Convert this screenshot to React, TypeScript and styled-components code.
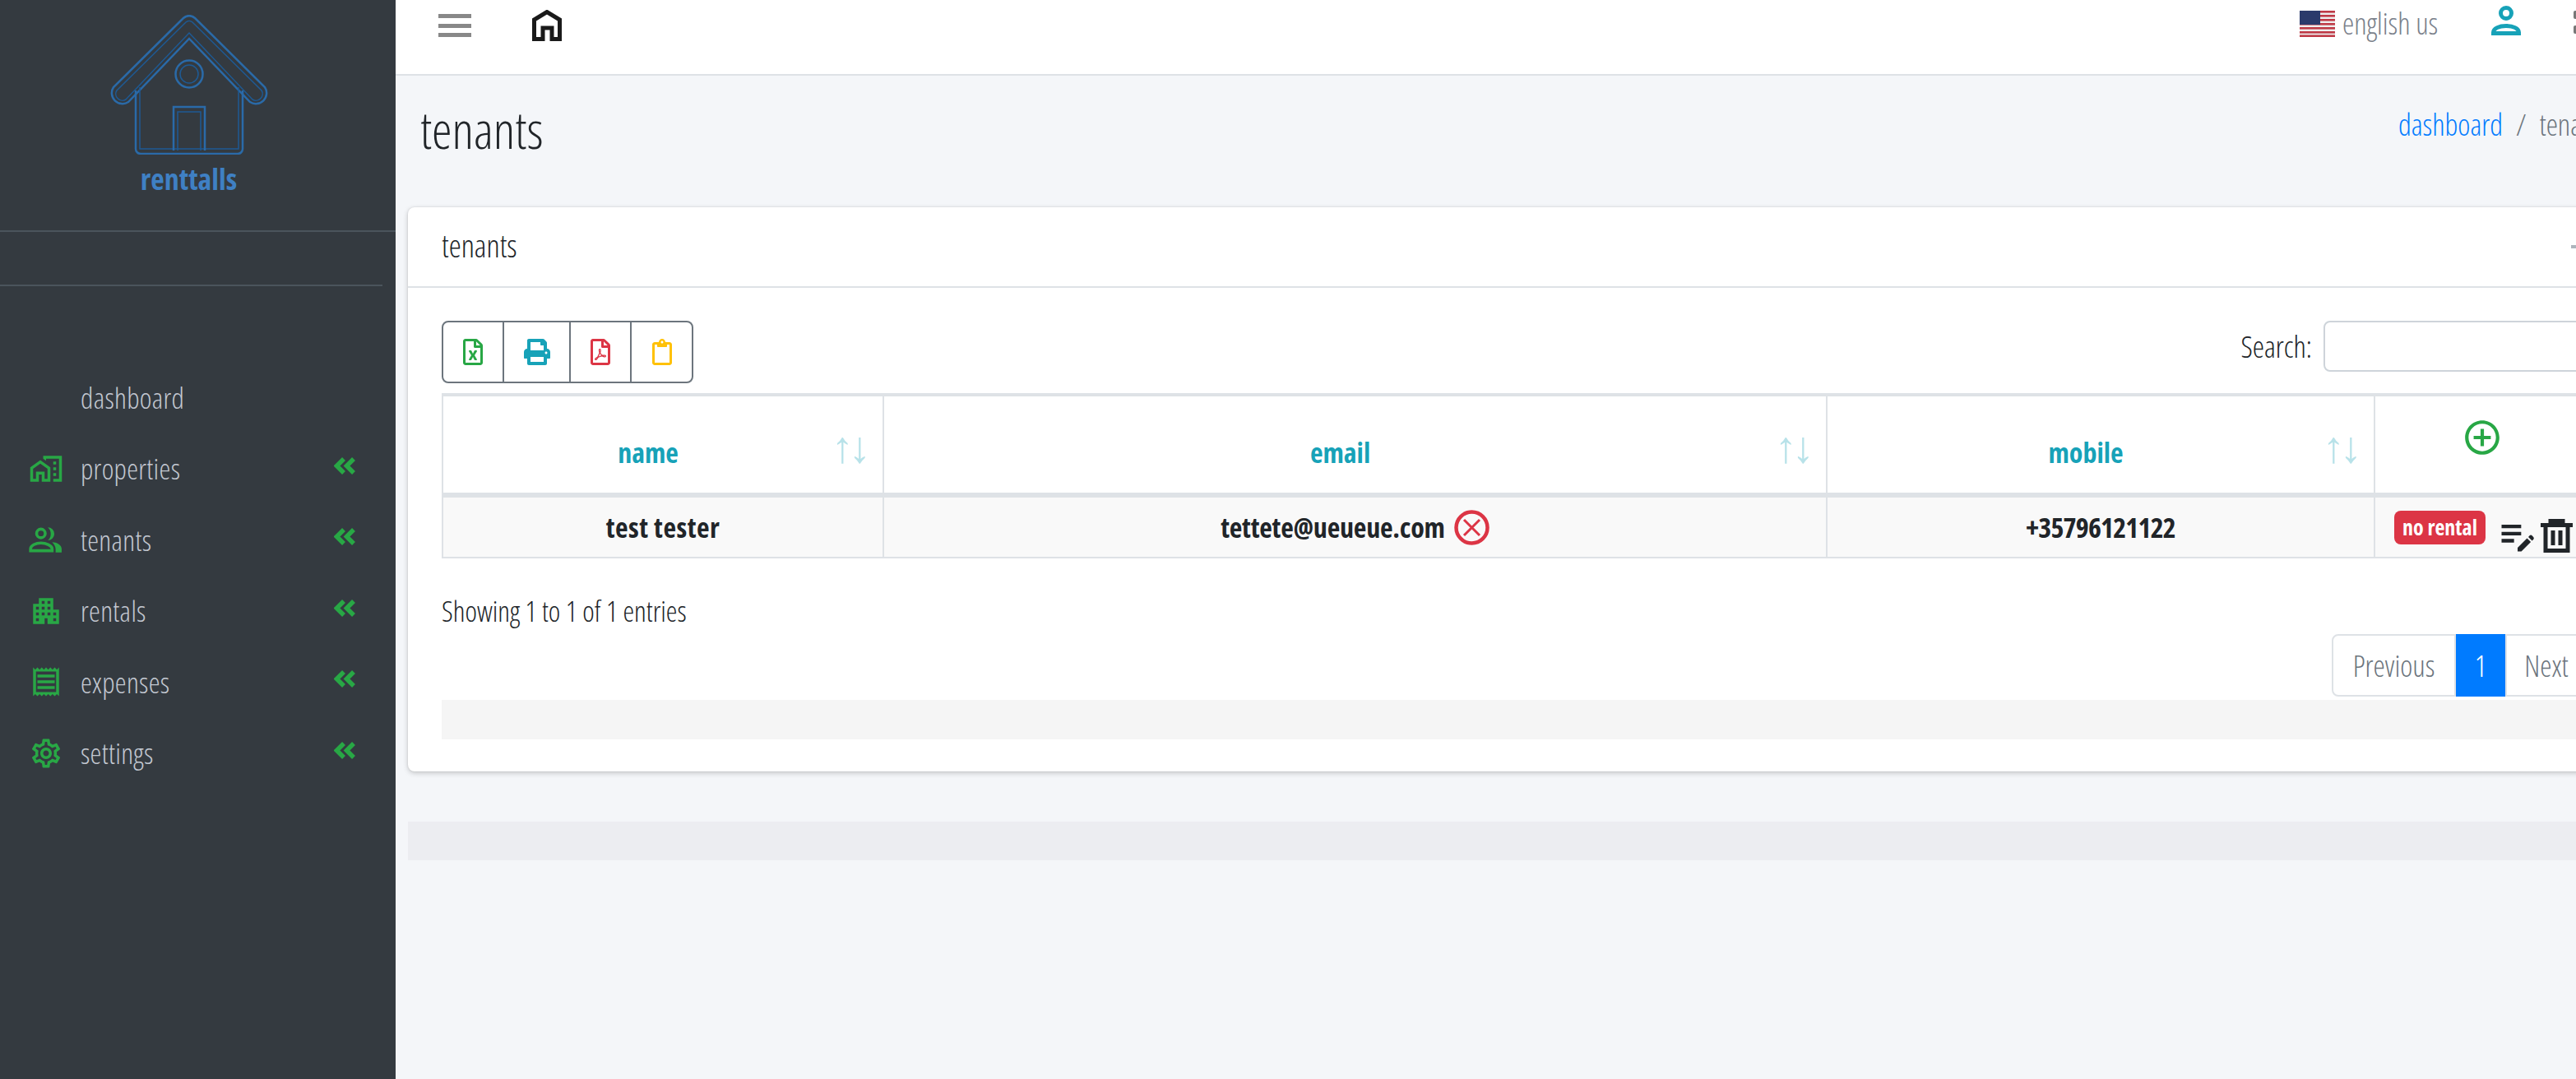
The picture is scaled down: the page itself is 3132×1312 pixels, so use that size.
import React from "react";
import styled, { createGlobalStyle } from "styled-components";
import {
  MdOutlineHomeWork,
  MdApartment,
  MdOutlineReceipt,
  MdOutlineSettings,
  MdOutlineEditNote,
  MdOutlineAddCircleOutline,
} from "react-icons/md";
import { FaRegFileExcel, FaPrint, FaRegFilePdf, FaRegClipboard } from "react-icons/fa";

const GlobalStyle = createGlobalStyle`
  html, body { margin: 0; padding: 0; height: 100%; overflow: hidden; }
  body {
    font-family: "Open Sans", "Liberation Sans", sans-serif;
    font-weight: 300;
    font-stretch: 75%;
    background: #f4f6f9;
  }
  button, input { font: inherit; }
`;

const Page = styled.div`
  display: flex;
  width: 3132px;
  height: 1312px;
  overflow: hidden;
`;

const Sidebar = styled.aside`
  flex: none;
  width: 481px;
  background: #343a40;
  display: flex;
  flex-direction: column;
`;

const Brand = styled.div`
  box-sizing: border-box;
  height: 282px;
  border-bottom: 2px solid #4b545c;
  display: flex;
  flex-direction: column;
  align-items: center;
  padding: 18px 22px 0 0;
`;

const BrandName = styled.div`
  margin-top: 12px;
  color: #3f80c4;
  font-size: 36px;
  font-weight: 700;
  line-height: 36px;
`;

const UserPanel = styled.div`
  height: 64px;
  width: 465px;
  border-bottom: 2px solid #4b545c;
`;

const Nav = styled.nav`
  margin-top: 92px;
  display: flex;
  flex-direction: column;
`;

const NavItem = styled.div`
  height: 86.5px;
  display: flex;
  align-items: center;
  padding: 0 49px 0 35px;
  color: #c2c7d0;
  font-size: 35px;
  letter-spacing: 0.3px;
`;

const NavIcon = styled.span`
  width: 42px;
  height: 42px;
  margin-right: 21px;
  color: #28a745;
  font-size: 42px;
  display: flex;
`;

const NavLabel = styled.span`
  flex: 1;
`;

const Chevron = styled.svg`
  width: 26px;
  height: 21px;
  margin-top: -7px;
  fill: none;
  stroke: #28a745;
  stroke-width: 5.5;
`;

const Main = styled.main`
  flex: none;
  width: 2722px;
  display: flex;
  flex-direction: column;
`;

const TopBar = styled.header`
  height: 92px;
  box-sizing: border-box;
  background: #fff;
  border-bottom: 2px solid #dee2e6;
  display: flex;
  padding-left: 52px;
`;

const Burger = styled.div`
  width: 40px;
  height: 28px;
  margin-top: 17px;
  display: flex;
  flex-direction: column;
  justify-content: space-between;
  span { height: 5px; background: #888; }
`;

const HomeIcon = styled.svg`
  width: 36px;
  height: 38px;
  margin: 12px 0 0 74px;
  fill: none;
  stroke: #1a1a1a;
  stroke-width: 5;
`;

const TopRight = styled.div`
  margin-left: auto;
  width: 407px;
  display: flex;
  align-items: flex-start;
`;

const Lang = styled.span`
  width: 233px;
  margin-top: 4px;
  display: flex;
  align-items: center;
  gap: 9px;
  color: #7a808a;
  font-size: 36px;
  white-space: nowrap;
`;

const FlagIcon = styled.svg`
  flex: none;
  width: 43px;
  height: 32px;
`;

const UserIcon = styled.svg`
  width: 36px;
  height: 36px;
  margin-top: 7px;
  fill: none;
  stroke: #17a2b8;
  stroke-width: 5;
`;

const AppsStub = styled.div`
  margin: 13px 0 0 64px;
  display: flex;
  flex-direction: column;
  gap: 8px;
  span { width: 10px; height: 10px; background: #777; border-radius: 2px; }
`;

const ContentHeader = styled.div`
  box-sizing: border-box;
  height: 160px;
  padding: 28px 0 0 30px;
  display: flex;
  justify-content: space-between;
`;

const Title = styled.h1`
  margin: 0;
  font-size: 62px;
  font-weight: 300;
  color: #212529;
  line-height: 1.2;
`;

const Crumbs = styled.div`
  width: 287px;
  margin-top: 7px;
  font-size: 36px;
  color: #6c757d;
  display: flex;
  gap: 16px;
  white-space: nowrap;
  a { color: #007bff; }
`;

const Card = styled.section`
  margin-left: 15px;
  width: 2692px;
  background: #fff;
  border-radius: 8px;
  box-shadow: 0 0 2px rgba(0,0,0,.125), 0 2px 6px rgba(0,0,0,.2);
`;

const CardHeader = styled.div`
  box-sizing: border-box;
  height: 98px;
  border-bottom: 2px solid #dee2e6;
  padding: 0 46px 4px 41px;
  font-size: 38px;
  color: #212529;
  display: flex;
  align-items: center;
  justify-content: space-between;
`;

const CollapseTool = styled.span`
  width: 16px;
  height: 4px;
  background: #adb5bd;
  margin-top: 4px;
`;

const CardBody = styled.div`
  padding: 40px 40px 39px 41px;
`;

const ToolRow = styled.div`
  display: flex;
  justify-content: space-between;
  height: 88px;
`;

const BtnGroup = styled.div`
  display: flex;
  height: 76px;
  box-sizing: border-box;
  border: 2px solid #6c757d;
  border-radius: 8px;
`;

const ToolBtn = styled.button<{ $w: number; $c: string }>`
  width: ${(p) => p.$w}px;
  background: none;
  border: none;
  border-right: 2px solid #6c757d;
  color: ${(p) => p.$c};
  font-size: 32px;
  display: flex;
  align-items: center;
  justify-content: center;
  padding: 0;
  &:last-child { border-right: none; }
`;

const SearchBox = styled.label`
  display: flex;
  gap: 14px;
  font-size: 36px;
  color: #212529;
  height: 62px;
  align-items: center;
`;

const SearchInput = styled.input`
  width: 323px;
  height: 62px;
  box-sizing: border-box;
  border: 2px solid #ced4da;
  border-radius: 8px;
`;

const Table = styled.table`
  width: 100%;
  table-layout: fixed;
  border-collapse: collapse;
`;

const Th = styled.th<{ $w: number }>`
  width: ${(p) => p.$w}px;
  height: 122px;
  box-sizing: border-box;
  padding: 18px 36px 0 0;
  border: 2px solid #dee2e6;
  border-top-width: 4px;
  border-bottom-width: 6px;
  color: #17a2b8;
  font-size: 34px;
  font-weight: 700;
  position: relative;
`;

const SortGlyph = styled.span`
  position: absolute;
  right: 20px;
  top: 22px;
  font-size: 54px;
  font-weight: 300;
  opacity: .3;
  letter-spacing: -6px;
`;

const AddCell = styled(Th)`
  padding: 0;
`;

const AddIcon = styled.span`
  color: #28a745;
  font-size: 50px;
  display: flex;
  justify-content: center;
  margin-top: -18px;
`;

const Td = styled.td<{ $spacing?: number }>`
  height: 72px;
  background: #f9f9f9;
  border: 2px solid #dee2e6;
  text-align: center;
  font-size: 34px;
  font-weight: 700;
  letter-spacing: ${(p) => p.$spacing ?? 0}px;
  color: #212529;
  padding: 0;
  white-space: nowrap;
`;

const EmailCell = styled.span`
  display: inline-flex;
  align-items: center;
  gap: 11px;
`;

const RemoveIcon = styled.svg`
  width: 43px;
  height: 43px;
  fill: none;
  stroke: #dc3545;
  stroke-width: 4.5;
`;

const ActionCell = styled.div`
  display: flex;
  align-items: center;
  padding-left: 23px;
`;

const Badge = styled.span`
  background: #dc3545;
  color: #fff;
  border-radius: 8px;
  width: 111px;
  height: 41px;
  display: flex;
  align-items: center;
  justify-content: center;
  font-size: 26px;
  font-weight: 700;
  margin-right: 13px;
`;

const EditIcon = styled.span`
  display: flex;
  font-size: 52px;
  color: #212529;
  margin: 10px 2px -10px 0;
`;

const TrashIcon = styled.svg`
  width: 39px;
  height: 41px;
  fill: none;
  stroke: #212529;
  stroke-width: 5;
  margin: 10px 0 -10px 0;
`;

const Info = styled.div`
  margin-top: 42px;
  font-size: 34.5px;
  color: #212529;
  line-height: 44px;
`;

const PagerRow = styled.div`
  margin-top: 6px;
  display: flex;
  padding-left: 2298px;
`;

const Pager = styled.div`
  display: flex;
  height: 76px;
  font-size: 36px;
  color: #6c757d;
`;

const PageBtn = styled.span<{ $active?: boolean; $w: number }>`
  width: ${(p) => p.$w}px;
  box-sizing: border-box;
  display: flex;
  align-items: center;
  justify-content: center;
  background: ${(p) => (p.$active ? "#007bff" : "#fff")};
  color: ${(p) => (p.$active ? "#fff" : "#6c757d")};
  border: 2px solid ${(p) => (p.$active ? "#007bff" : "#dee2e6")};
  &:first-child { border-radius: 8px 0 0 8px; }
`;

const GreyBar = styled.div`
  margin-top: 4px;
  height: 48px;
  background: #f5f5f5;
`;

const FooterBar = styled.div`
  margin: 61px 0 0 15px;
  height: 47px;
  background: #ecedf1;
`;

function TenantsIcon() {
  return (
    <svg width="40" height="42" viewBox="0 0 38 40" fill="none" stroke="#28a745" strokeWidth="3.4">
      <circle cx="14" cy="13" r="5" />
      <path d="M22 6a7.5 7.5 0 0 1 0 15 10 10 0 0 0 0-15Z" fill="#28a745" stroke="none" />
      <path d="M2 33v-2c0-4 6-7 12-7s13 3 13 7v2Z" />
      <path d="M27 23c5 0 11 3 11 8v4h-7v-4c0-3-2-6-4-8Z" fill="#28a745" stroke="none" />
    </svg>
  );
}

const menu = [
  { label: "dashboard" },
  { label: "properties", icon: <MdOutlineHomeWork /> },
  { label: "tenants", icon: <TenantsIcon /> },
  { label: "rentals", icon: <MdApartment /> },
  { label: "expenses", icon: <MdOutlineReceipt /> },
  { label: "settings", icon: <MdOutlineSettings /> },
];

function Logo() {
  return (
    <svg width="194" height="170" viewBox="0 0 194 170" fill="none" stroke="#2a6aa8" strokeWidth="2.5">
      <path d="M90 4a10 10 0 0 1 14 0L189 88a13 13 0 0 1-18 18L97 29 23 106A13 13 0 0 1 5 88Z" />
      <path d="M93 9a6 6 0 0 1 8 0L185 92a8 8 0 0 1-11 11L97 22 20 103A8 8 0 0 1 9 92Z" stroke="#1e5a94" strokeWidth="1.5" />
      <path d="M32 92V163a6 6 0 0 0 6 6H156a6 6 0 0 0 6-6V92" />
      <path d="M37 88V163H157V88" stroke="#1e5a94" strokeWidth="1.5" />
      <circle cx="97" cy="72" r="16.5" />
      <circle cx="97" cy="72" r="11" stroke="#1e5a94" strokeWidth="1.5" />
      <path d="M78 165V112h38v53" />
      <path d="M83 165V118h28v47" stroke="#1e5a94" strokeWidth="1.5" />
    </svg>
  );
}

function Flag() {
  return (
    <FlagIcon viewBox="0 0 43 32">
      <rect width="43" height="32" fill="#eee" />
      {[0, 5, 10, 15, 20, 25, 29.4].map((y) => (
        <rect key={y} y={y} width="43" height="2.6" fill="#bf3a46" />
      ))}
      <rect width="25" height="17" fill="#2b3a6b" />
    </FlagIcon>
  );
}

export default function App() {
  return (
    <>
      <GlobalStyle />
      <Page>
        <Sidebar>
          <Brand>
            <Logo />
            <BrandName>renttalls</BrandName>
          </Brand>
          <UserPanel />
          <Nav>
            {menu.map((m) => (
              <NavItem key={m.label}>
                <NavIcon>{m.icon}</NavIcon>
                <NavLabel>{m.label}</NavLabel>
                {m.icon && (
                  <Chevron viewBox="0 0 26 21">
                    <path d="M12 2 3.5 10.5 12 19M24 2l-8.5 8.5L24 19" />
                  </Chevron>
                )}
              </NavItem>
            ))}
          </Nav>
        </Sidebar>
        <Main>
          <TopBar>
            <Burger>
              <span />
              <span />
              <span />
            </Burger>
            <HomeIcon viewBox="0 0 36 38">
              <path d="M2.5 35.5V12L18 2.5 33.5 12v23.500H24V22H13v13.500Z" />
            </HomeIcon>
            <TopRight>
              <Lang>
                <Flag />
                english us
              </Lang>
              <UserIcon viewBox="0 0 36 36">
                <circle cx="18" cy="9" r="6.500" />
                <path d="M2.500 33.500v-1c0-5 7-8 15.500-8s15.500 3 15.500 8v1Z" />
              </UserIcon>
              <AppsStub>
                <span />
                <span />
              </AppsStub>
            </TopRight>
          </TopBar>
          <ContentHeader>
            <Title>tenants</Title>
            <Crumbs>
              <a>dashboard</a>
              <span>/</span>
              <span>tenants</span>
            </Crumbs>
          </ContentHeader>
          <Card>
            <CardHeader>
              tenants
              <CollapseTool />
            </CardHeader>
            <CardBody>
              <ToolRow>
                <BtnGroup>
                  <ToolBtn $w={74} $c="#28a745"><FaRegFileExcel /></ToolBtn>
                  <ToolBtn $w={81} $c="#17a2b8"><FaPrint /></ToolBtn>
                  <ToolBtn $w={74} $c="#dc3545"><FaRegFilePdf /></ToolBtn>
                  <ToolBtn $w={73} $c="#ffc107"><FaRegClipboard /></ToolBtn>
                </BtnGroup>
                <SearchBox>
                  Search:
                  <SearchInput />
                </SearchBox>
              </ToolRow>
              <Table>
                <thead>
                  <tr>
                    <Th $w={536}>name<SortGlyph>↑↓</SortGlyph></Th>
                    <Th $w={1147}>email<SortGlyph>↑↓</SortGlyph></Th>
                    <Th $w={666}>mobile<SortGlyph>↑↓</SortGlyph></Th>
                    <AddCell $w={262}>
                      <AddIcon><MdOutlineAddCircleOutline /></AddIcon>
                    </AddCell>
                  </tr>
                </thead>
                <tbody>
                  <tr>
                    <Td $spacing={0.5}>test tester</Td>
                    <Td $spacing={-0.2}>
                      <EmailCell>
                        tettete@ueueue.com
                        <RemoveIcon viewBox="0 0 43 43">
                          <circle cx="21.500" cy="21.500" r="19" />
                          <path d="M12 12l19 19M31 12 12 31" strokeWidth="3" />
                        </RemoveIcon>
                      </EmailCell>
                    </Td>
                    <Td $spacing={-0.8}>+35796121122</Td>
                    <Td>
                      <ActionCell>
                        <Badge>no rental</Badge>
                        <EditIcon><MdOutlineEditNote /></EditIcon>
                        <TrashIcon viewBox="0 0 39 41">
                          <path d="M0 7.500h39M12 7V2.500h15V7M6 8v30.500h27V8M15 14v18M24 14v18" />
                        </TrashIcon>
                      </ActionCell>
                    </Td>
                  </tr>
                </tbody>
              </Table>
              <Info>Showing 1 to 1 of 1 entries</Info>
              <PagerRow>
                <Pager>
                  <PageBtn $w={151}>Previous</PageBtn>
                  <PageBtn $w={60} $active>1</PageBtn>
                  <PageBtn $w={100}>Next</PageBtn>
                </Pager>
              </PagerRow>
              <GreyBar />
            </CardBody>
          </Card>
          <FooterBar />
        </Main>
      </Page>
    </>
  );
}
